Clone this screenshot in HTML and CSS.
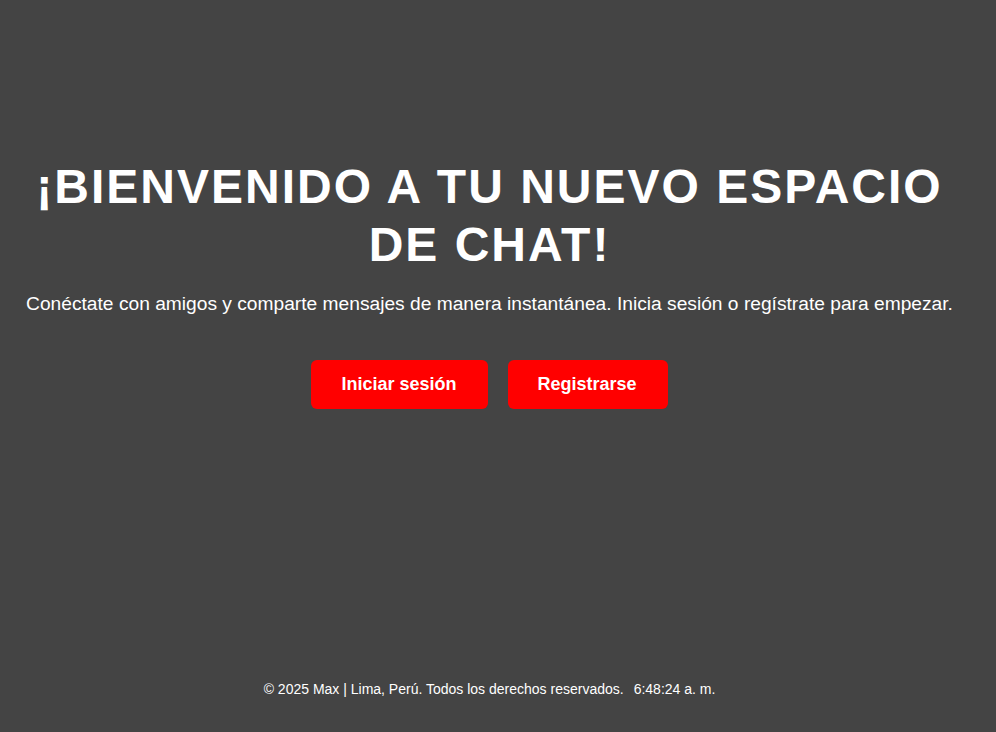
FILE: index.html
```html
<!DOCTYPE html>
<html lang="es">
<head>
<meta charset="utf-8">
<title>Chat</title>
<link rel="stylesheet" href="styles.css">
</head>
<body>
<main class="hero">
  <h1 class="hero-title">¡Bienvenido a tu nuevo espacio de chat!</h1>
  <p class="hero-text">Conéctate con amigos y comparte mensajes de manera instantánea. Inicia sesión o regístrate para empezar.</p>
  <div class="actions">
    <a class="btn" href="#">Iniciar sesión</a>
    <a class="btn" href="#">Registrarse</a>
  </div>
</main>
<footer class="footer">
  <span>© 2025 Max | Lima, Perú. Todos los derechos reservados.</span>
  <span class="clock">6:48:24 a. m.</span>
</footer>
</body>
</html>
```
FILE: styles.css
```css
html, body {
  margin: 0;
  padding: 0;
}
body {
  background: #444444;
  color: #ffffff;
  font-family: "Liberation Sans", Arial, sans-serif;
  min-height: 100vh;
  display: flex;
  flex-direction: column;
  padding-right: 17px;
  box-sizing: border-box;
}
.hero {
  flex: 1;
  display: flex;
  flex-direction: column;
  align-items: center;
  text-align: center;
  padding: 158px 20px 0;
}
.hero-title {
  margin: 0;
  font-size: 48px;
  line-height: 1.2;
  font-weight: 700;
  text-transform: uppercase;
  letter-spacing: 2px;
  max-width: 920px;
}
.hero-text {
  margin: 20px 0 0;
  font-size: 19.2px;
  line-height: 22px;
}
.actions {
  display: flex;
  gap: 20px;
  margin-top: 45px;
}
.btn {
  display: block;
  background: #ff0000;
  color: #ffffff;
  text-decoration: none;
  font-weight: 700;
  font-size: 18px;
  line-height: 21px;
  padding: 14px 31px 14px 30px;
  border-radius: 6px;
  height: 49px;
  box-sizing: border-box;
}
.footer {
  display: flex;
  justify-content: center;
  gap: 10px;
  font-size: 14px;
  line-height: 16px;
  padding-bottom: 35px;
}
```
